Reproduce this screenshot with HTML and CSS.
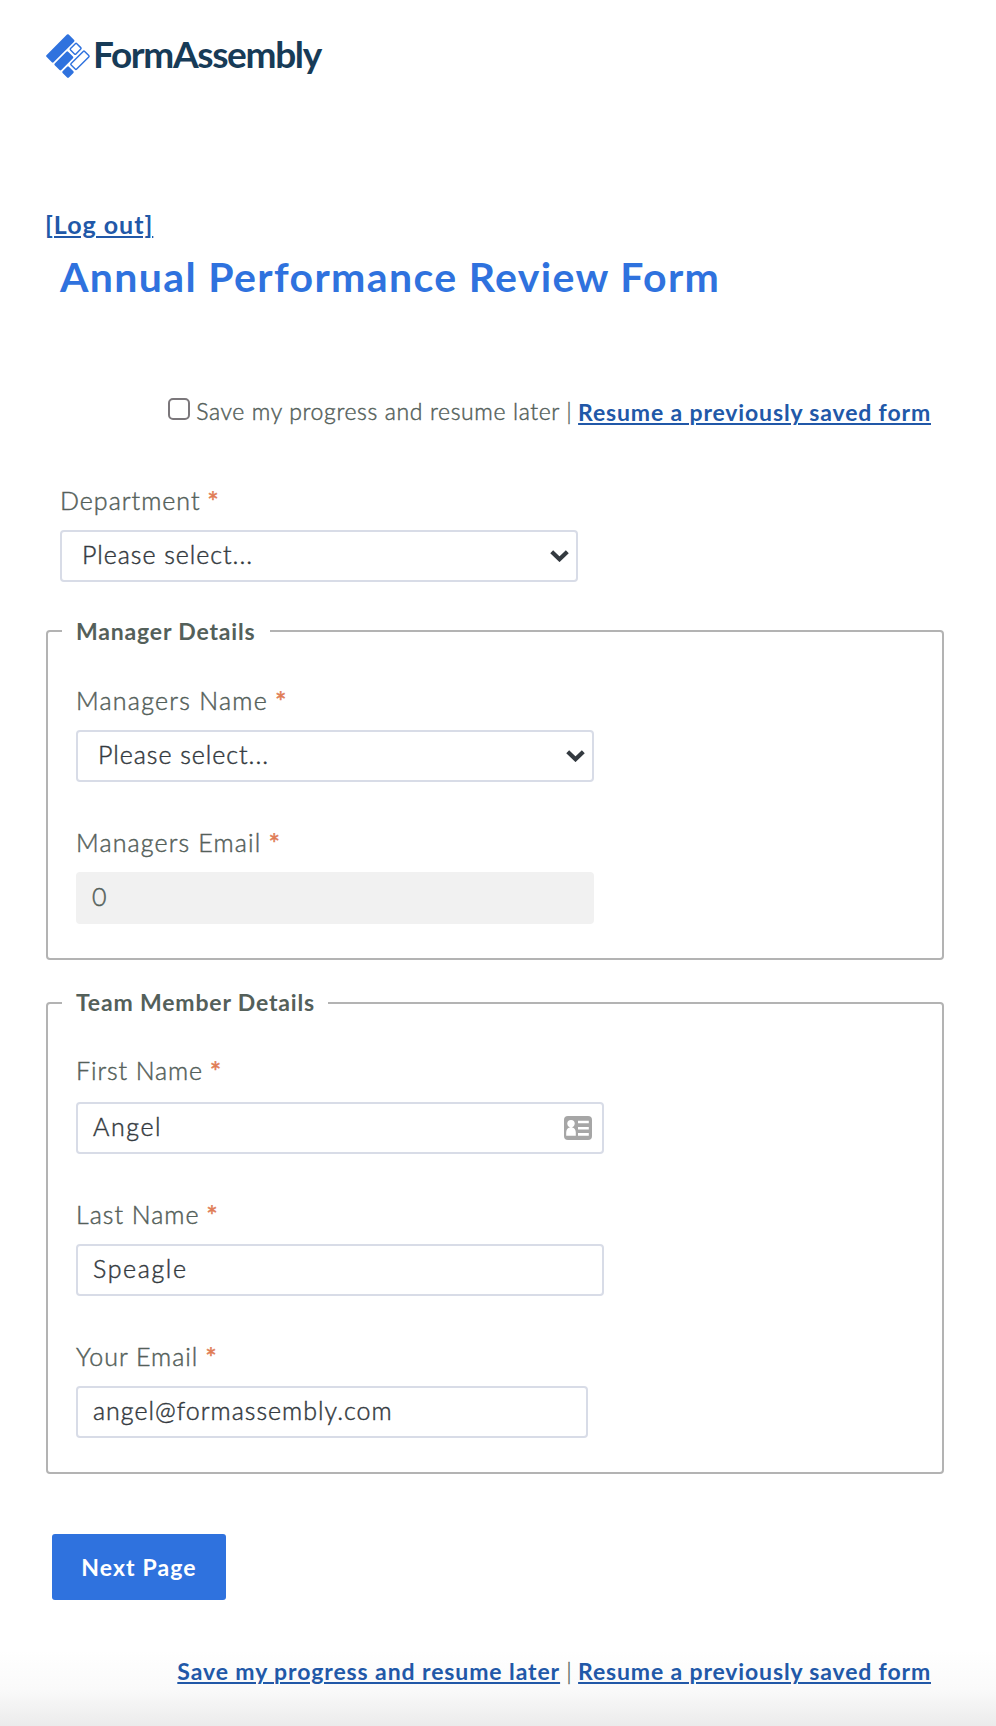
FILE: index.html
```
<!DOCTYPE html>
<html lang="en">
<head>
<meta charset="utf-8">
<title>Annual Performance Review Form</title>
<link rel="stylesheet" href="styles.css">
</head>
<body>
<div class="page">
  <header class="brand">
    <svg class="brand-mark" width="44" height="44" viewBox="0 0 44 44" aria-hidden="true">
      <g transform="translate(22 22) rotate(-45) scale(1.03)">
        <rect x="-15.4" y="-15.4" width="30.6" height="9.8" rx="1.2" fill="#2f72de"/>
        <rect x="-15.4" y="-4" width="18.4" height="9" rx="1.2" fill="#2f72de"/>
        <rect x="5.9" y="-3.4" width="8.6" height="7.4" rx="1" fill="none" stroke="#2f72de" stroke-width="1.4"/>
        <rect x="-15.4" y="6.8" width="8.6" height="8.6" rx="1.2" fill="#2f72de"/>
        <rect x="-4" y="7.3" width="18.6" height="7.6" rx="1" fill="none" stroke="#2f72de" stroke-width="1.4"/>
      </g>
    </svg>
    <span class="brand-name">FormAssembly</span>
  </header>

  <a class="logout" href="#">[Log out]</a>
  <h1 class="title">Annual Performance Review Form</h1>

  <div class="save-row">
    <input class="check" type="checkbox" id="save">
    <label class="save-label" for="save">Save my progress and resume later</label>
    <span class="bar">|</span>
    <a class="link" href="#">Resume a previously saved form</a>
  </div>

  <form>
    <div class="field field-top">
      <label class="label t-100">Department <span class="req">*</span></label>
      <div class="control w-518 select">
        <span class="value">Please select...</span>
        <svg class="chevron" width="19" height="12" viewBox="0 0 19 12"><path d="M1.7 1.7 9.5 9.2 17.3 1.7" fill="none" stroke="#343a40" stroke-width="4.2"/></svg>
      </div>
    </div>

    <fieldset class="group">
      <legend class="legend">Manager Details</legend>
      <div class="field">
        <label class="label t-130">Managers Name <span class="req">*</span></label>
        <div class="control w-518 select">
          <span class="value">Please select...</span>
          <svg class="chevron" width="19" height="12" viewBox="0 0 19 12"><path d="M1.7 1.7 9.5 9.2 17.3 1.7" fill="none" stroke="#343a40" stroke-width="4.2"/></svg>
        </div>
      </div>
      <div class="field">
        <label class="label t-115">Managers Email <span class="req">*</span></label>
        <div class="control w-518 readonly"><span class="value">0</span></div>
      </div>
    </fieldset>

    <fieldset class="group group-team">
      <legend class="legend legend-team">Team Member Details</legend>
      <div class="field field-first">
        <label class="label t-090">First Name <span class="req">*</span></label>
        <div class="control w-528">
          <span class="value t-160">Angel</span>
          <svg class="card-icon" width="28" height="24" viewBox="0 0 28 24">
            <rect width="28" height="24" rx="4" fill="#a6a6a6"/>
            <circle cx="7" cy="7.6" r="3.7" fill="#fff"/>
            <path d="M2.2 19.8v-3.2c0-2.6 1.4-4.4 2.8-4.8l2-1 2 1c1.4.4 2.8 2.2 2.8 4.8v3.2z" fill="#fff"/>
            <path d="M14 6h10.8M14 12.2h10.8M14 18.4h10.8" stroke="#fff" stroke-width="2.6"/>
          </svg>
        </div>
      </div>
      <div class="field">
        <label class="label t-100">Last Name <span class="req">*</span></label>
        <div class="control w-528"><span class="value t-160">Speagle</span></div>
      </div>
      <div class="field">
        <label class="label t-100">Your Email <span class="req">*</span></label>
        <div class="control w-512"><span class="value t-100">angel@formassembly.com</span></div>
      </div>
    </fieldset>

    <button class="next" type="button">Next Page</button>
  </form>

  <footer class="footer-row">
    <a class="link link-save" href="#">Save my progress and resume later</a>
    <span class="bar">|</span>
    <a class="link" href="#">Resume a previously saved form</a>
  </footer>
</div>
</body>
</html>
```

FILE: styles.css
```
* { box-sizing: border-box; }

body {
  margin: 0;
  background: #fff;
  color: #54605a;
  font-family: Lato, "Open Sans", sans-serif;
  font-weight: 300;
}

.page {
  height: 1726px;
  padding: 34px 52px 0 46px;
  background: linear-gradient(to bottom, #fff 1650px, #fafafa 1690px, #ebebeb 1726px);
}

.brand {
  display: flex;
  gap: 3px;
  height: 44px;
}
.brand-mark {
  flex: none;
  overflow: visible;
}
.brand-name {
  color: #173b57;
  font-size: 37px;
  font-weight: 700;
  line-height: 40px;
  letter-spacing: -1.35px;
}

.logout {
  display: block;
  width: max-content;
  margin: 131px 0 0 -1px;
  color: #2158a8;
  font-size: 25px;
  font-weight: 700;
  line-height: 30px;
  letter-spacing: 1px;
  text-decoration-thickness: 2px;
  text-underline-offset: 2px;
}

.title {
  margin: 13px 0 0 14px;
  color: #2f72de;
  font-size: 41px;
  font-weight: 700;
  line-height: 50px;
  letter-spacing: 1.36px;
}

.save-row,
.footer-row {
  display: flex;
  justify-content: flex-end;
  height: 30px;
  padding-right: 13px;
  font-size: 23px;
  line-height: 30px;
}
.save-row { margin-top: 94px; }
.footer-row { margin-top: 56px; }

.check {
  appearance: none;
  width: 22px;
  height: 22px;
  margin: 2px 6px 0 0;
  border: 2px solid #7b777b;
  border-radius: 5px;
}
.save-label {
  letter-spacing: 0.62px;
  -webkit-text-stroke: 0.45px;
}
.bar {
  width: 18px;
  text-align: center;
  -webkit-text-stroke: 0.3px;
}
.link {
  color: #2158a8;
  font-weight: 700;
  letter-spacing: 0.85px;
  text-decoration-thickness: 2px;
  text-underline-offset: 2px;
}
.link-save { letter-spacing: 0.9px; }
.save-row .link { line-height: 32px; }

.field-top { margin: 59px 0 34px 14px; }
.field + .field { margin-top: 45px; }

.label {
  display: block;
  height: 45px;
  font-size: 25px;
  line-height: 30px;
  -webkit-text-stroke: 0.45px;
}
.field-first .label { height: 47px; }
.req {
  display: inline-block;
  height: 26px;
  margin-left: -1px;
  padding-top: 2px;
  color: #e07b54;
  font-size: 27px;
  font-weight: 400;
  line-height: 30px;
  vertical-align: top;
}

.control {
  display: flex;
  align-items: center;
  justify-content: space-between;
  height: 52px;
  padding: 0 10px 0 15px;
  border: 2px solid #d8dce7;
  border-radius: 4px;
  background: #fff;
  color: #343a40;
  font-size: 25px;
  letter-spacing: 0.97px;
}
.value {
  padding-bottom: 4px;
  line-height: 30px;
  -webkit-text-stroke: 0.45px;
}
.select { padding: 0 7px 0 20px; }
.readonly {
  padding-left: 14px;
  border-color: #f1f1f1;
  background: #f1f1f1;
  color: #54605a;
}
.w-512 { width: 512px; }
.w-518 { width: 518px; }
.w-528 { width: 528px; }

.t-090 { letter-spacing: 0.9px; }
.t-100 { letter-spacing: 1px; }
.t-115 { letter-spacing: 1.15px; }
.t-130 { letter-spacing: 1.25px; }
.t-160 { letter-spacing: 1.6px; }

.group {
  min-width: 0;
  margin: 0;
  padding: 39px 28px 34px;
  border: 2px solid #b3b3b3;
  border-radius: 4px;
}
.group-team {
  margin-top: 28px;
  padding-top: 37px;
}
.legend {
  width: 208px;
  margin-left: -14px;
  padding: 0 0 0 14px;
  font-size: 23px;
  font-weight: 700;
  line-height: 30px;
  letter-spacing: 0.83px;
}
.legend-team {
  width: 266px;
  padding-bottom: 2px;
  line-height: 28px;
}

.next {
  display: block;
  width: 174px;
  height: 66px;
  margin: 60px 0 0 6px;
  padding: 0;
  border: 0;
  border-radius: 3px;
  background: #2f72de;
  color: #fff;
  font: 700 23px/30px Lato, "Open Sans", sans-serif;
  letter-spacing: 1.1px;
}
```
